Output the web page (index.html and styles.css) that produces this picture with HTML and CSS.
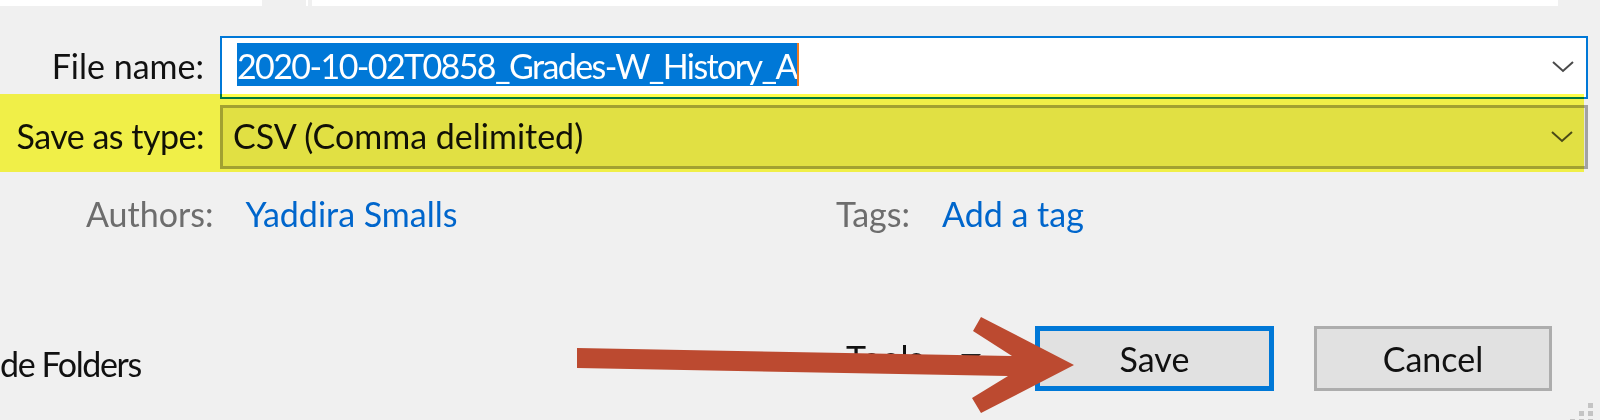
FILE: index.html
```html
<!DOCTYPE html>
<html lang="en">
<head>
<meta charset="utf-8">
<title>Save As</title>
<link rel="stylesheet" href="styles.css">
</head>
<body>
<div class="dialog">
  <div class="panes">
    <div class="pane pane-nav"></div>
    <div class="pane pane-sep"></div>
    <div class="pane pane-list"></div>
  </div>

  <div class="fields">
    <div class="field-row name-row">
      <label class="field-label">File name:</label>
      <div class="input">
        <span class="selection">2020-10-02T0858_Grades-W_History_A</span><span class="caret"></span>
        <svg class="chev" width="22" height="12" viewBox="0 0 22 12"><path d="M1 1 L11 10 L21 1" fill="none" stroke="#4a4a4a" stroke-width="2"/></svg>
      </div>
    </div>
    <div class="field-row type-row">
      <label class="field-label type-label">Save as type:</label>
      <div class="combo">
        <span class="combo-text">CSV (Comma delimited)</span>
        <svg class="chev" width="22" height="12" viewBox="0 0 22 12"><path d="M1 1 L11 10 L21 1" fill="none" stroke="#4a4a4a" stroke-width="2"/></svg>
      </div>
    </div>
  </div>

  <div class="meta">
    <div class="meta-group authors">
      <span class="meta-key">Authors:</span>
      <a class="meta-link">Yaddira Smalls</a>
    </div>
    <div class="meta-group tags">
      <span class="meta-key">Tags:</span>
      <a class="meta-link">Add a tag</a>
    </div>
  </div>

  <div class="footer">
    <span class="folders">de Folders</span>
    <span class="tools">Tools<span class="tri"></span></span>
    <button class="btn btn-default">Save</button>
    <button class="btn">Cancel</button>
  </div>

  <div class="highlighter"></div>

  <svg class="arrow" width="1600" height="420" viewBox="0 0 1600 420">
    <polygon points="577,348 1012,356 973,331 981,317 1074,365 981,413 972,398 1008,376 577,368" fill="#bc4a30"/>
  </svg>

  <svg class="grip" width="30" height="22" viewBox="0 0 30 22">
    <g fill="#c4c4c4">
      <rect x="20" y="2" width="5" height="5"/>
      <rect x="11" y="10" width="5" height="5"/>
      <rect x="20" y="10" width="5" height="5"/>
      <rect x="2" y="18" width="5" height="5"/>
      <rect x="11" y="18" width="5" height="5"/>
      <rect x="20" y="18" width="5" height="5"/>
    </g>
  </svg>
</div>
</body>
</html>
```

FILE: styles.css
```css
html, body {
  margin: 0;
  padding: 0;
  background: #f0f0f0;
}

.dialog {
  position: relative;
  width: 1600px;
  height: 420px;
  overflow: hidden;
  background: #f0f0f0;
  font-family: Lato, "Open Sans", sans-serif;
  font-size: 34px;
  line-height: 43px;
  color: #111;
}

.panes {
  display: flex;
  height: 6px;
}
.pane { background: #fff; height: 6px; }
.pane-nav { width: 262px; margin-right: 44px; }
.pane-sep { width: 2px; margin-right: 4px; }
.pane-list { width: 1246px; }

.fields {
  display: flex;
  flex-direction: column;
  gap: 6px;
  margin-top: 30px;
}

.field-row {
  display: flex;
  align-items: baseline;
}

.field-label {
  width: 204px;
  text-align: right;
  margin-right: 16px;
  flex: none;
}
.type-label { letter-spacing: -0.5px; }

.input {
  box-sizing: border-box;
  width: 1368px;
  height: 63px;
  border: 2px solid #0078d7;
  background: #fff;
  display: flex;
  align-items: flex-start;
  padding: 5px 12px 0 15px;
}

.selection {
  display: inline-block;
  background: #0078d7;
  color: #fff;
  height: 43px;
  line-height: 41px;
  padding-top: 2px;
  box-sizing: border-box;
  letter-spacing: -1.6px;
}

.caret {
  display: inline-block;
  width: 2px;
  height: 43px;
  background: #f07a1e;
}

.chev {
  margin-left: auto;
  align-self: center;
  flex: none;
}
.input .chev { margin-top: -6px; }

.combo {
  box-sizing: border-box;
  width: 1368px;
  height: 64px;
  border: 3px solid #a2a2a2;
  background: #e1e1e1;
  display: flex;
  align-items: center;
  padding: 0 12px 4px 10px;
}
.combo .chev { margin-top: 4px; }

.meta {
  display: flex;
  margin-top: 23px;
  padding-left: 86px;
}
.meta-group {
  display: flex;
  gap: 32px;
}
.authors { width: 750px; }
.meta-key { color: #6d6d6d; }
.meta-link { color: #0066cc; text-decoration: none; }

.footer {
  display: flex;
  align-items: flex-start;
  margin-top: 91px;
  height: 65px;
}

.folders {
  width: 846px;
  flex: none;
  margin-top: 16px;
  letter-spacing: -1.4px;
}

.tools {
  width: 189px;
  flex: none;
  margin-top: 10px;
  display: flex;
  align-items: center;
}
.tri {
  display: inline-block;
  margin-left: 38px;
  margin-top: 2px;
  width: 0;
  height: 0;
  border-left: 10px solid transparent;
  border-right: 10px solid transparent;
  border-top: 10px solid #222;
}

.btn {
  box-sizing: border-box;
  height: 65px;
  width: 238px;
  background: #e1e1e1;
  border: 3px solid #adadad;
  font: inherit;
  line-height: 43px;
  color: #111;
  padding: 0;
  margin: 0 0 0 40px;
}
.btn-default {
  width: 239px;
  border: 5px solid #0078d7;
  margin-left: 0;
}

.highlighter {
  position: absolute;
  left: 0;
  top: 94px;
  width: 1584px;
  height: 78px;
  background: rgb(255, 254, 76);
  mix-blend-mode: multiply;
  pointer-events: none;
}

.arrow {
  position: absolute;
  left: 0;
  top: 0;
  pointer-events: none;
}

.grip {
  position: absolute;
  right: 2px;
  bottom: -3px;
}
```
